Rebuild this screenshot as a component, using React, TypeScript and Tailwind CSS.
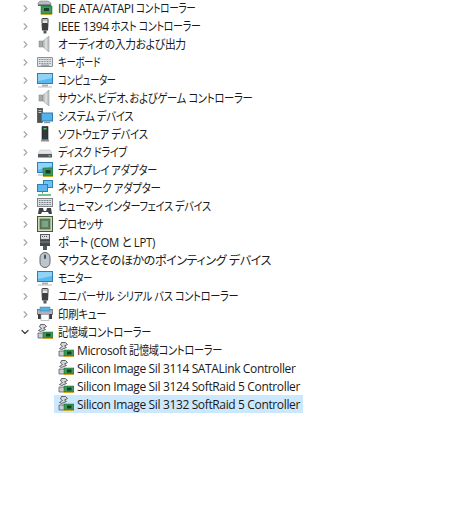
import { ChevronDown, ChevronRight } from "lucide-react"
import type { ReactNode } from "react"

const IdeIcon = () => (
    <svg width="16" height="16" viewBox="0 0 16 16">
        <path d="M1 3l2-2h8l3 2v2H1z" fill="#b8bcbf" stroke="#70767b" strokeWidth="0.5" />
        <rect x="1" y="4.5" width="13" height="1.5" fill="#5c6266" />
        <rect x="4" y="6" width="11" height="8" fill="#3b9a58" stroke="#116331" strokeWidth="0.5" />
        <rect x="7" y="8" width="5" height="3" fill="#17402a" />
        <path d="M4 14.5h11" stroke="#d0a92c" strokeWidth="1" />
    </svg>
)

const UsbIcon = () => (
    <svg width="16" height="16" viewBox="0 0 16 16">
        <rect x="5" y="0.5" width="6" height="5" rx="0.5" fill="#e6e6e6" stroke="#3c3c3c" />
        <path d="M6.5 2h1M8.5 2h1" stroke="#3c3c3c" />
        <path d="M4.5 5.5h7l-.5 7h-6z" fill="#3d3f42" />
        <rect x="6.5" y="12.5" width="3" height="3" fill="#55585c" />
    </svg>
)

const SpeakerIcon = () => (
    <svg width="16" height="16" viewBox="0 0 16 16">
        <rect x="2" y="5" width="4" height="6" fill="#a5aaa9" stroke="#7d8382" strokeWidth="0.5" />
        <path d="M6 5l6-5v16l-6-5z" fill="#c4c8c7" stroke="#838988" strokeWidth="0.5" />
        <path d="M9 2.5v11" stroke="#eceeed" />
    </svg>
)

const KeyboardIcon = () => (
    <svg width="16" height="16" viewBox="0 0 16 16">
        <rect x="0.5" y="3.5" width="15" height="9" rx="0.5" fill="#dfe2e5" stroke="#8b9196" />
        <path d="M2 5.5h12M2 7.5h12M2 9.5h12" stroke="#858c93" strokeDasharray="1 0.6" />
        <path d="M4 11.2h8" stroke="#858c93" />
    </svg>
)

const MonitorIcon = () => (
    <svg width="16" height="16" viewBox="0 0 16 16">
        <rect x="0.5" y="1.5" width="15" height="10" fill="#5bb8ef" stroke="#2d7fb8" />
        <path d="M1 2h14v4L1 9z" fill="#8fd3f7" />
        <path d="M5 13.5h6" stroke="#a9adb1" strokeWidth="2" />
        <path d="M1 15h14" stroke="#b7bbbf" />
    </svg>
)

const SystemIcon = () => (
    <svg width="16" height="16" viewBox="0 0 16 16">
        <rect x="0.5" y="0.5" width="5" height="14" fill="#4e5358" stroke="#30343a" strokeWidth="0.6" />
        <path d="M1.5 2.5h3M1.5 4.5h3" stroke="#c8ccd0" />
        <rect x="4.5" y="5" width="11" height="8" fill="#54b2e8" stroke="#2b7db4" />
        <path d="M7 14.5h6" stroke="#8f9498" strokeWidth="1.4" />
    </svg>
)

const TowerIcon = () => (
    <svg width="16" height="16" viewBox="0 0 16 16">
        <path d="M5 0.5h6v13H5z" fill="#33373b" stroke="#1f2225" strokeWidth="0.6" />
        <rect x="6.5" y="2" width="3" height="1.5" fill="#51c76e" />
        <rect x="4" y="13.5" width="8" height="2" fill="#8d9195" />
    </svg>
)

const DiskIcon = () => (
    <svg width="16" height="16" viewBox="0 0 16 16">
        <path d="M3 6h10l2 4H1z" fill="#e4e5e6" stroke="#b8babc" strokeWidth="0.5" />
        <rect x="1" y="10" width="14" height="3.5" rx="0.5" fill="#53575b" />
        <rect x="11.5" y="11" width="2" height="1.4" fill="#5ed16f" />
    </svg>
)

const DisplayAdapterIcon = () => (
    <svg width="16" height="16" viewBox="0 0 16 16">
        <rect x="0.5" y="0.5" width="15" height="10" fill="#5bb8ef" stroke="#2d7fb8" />
        <path d="M1 1h14v3L1 8z" fill="#8fd3f7" />
        <rect x="6" y="6" width="10" height="8" fill="#3b9a58" stroke="#116331" strokeWidth="0.5" />
        <rect x="8.5" y="8" width="5" height="3.5" fill="#17402a" />
        <path d="M6 14.5h10" stroke="#d0a92c" />
        <path d="M1 13h4" stroke="#a9adb1" />
    </svg>
)

const NetworkIcon = () => (
    <svg width="16" height="16" viewBox="0 0 16 16">
        <rect x="6.5" y="0.5" width="9" height="7" fill="#6fc2f2" stroke="#2d7fb8" />
        <rect x="0.5" y="4.5" width="10" height="7" fill="#5bb8ef" stroke="#2d7fb8" />
        <path d="M5.5 11.5v2" stroke="#7f8488" />
        <path d="M1 15h13" stroke="#4fbb62" strokeWidth="1.6" />
    </svg>
)

const HumanIcon = () => (
    <svg width="16" height="16" viewBox="0 0 16 16">
        <rect x="0.5" y="0.5" width="15" height="8" fill="#dfe2e5" stroke="#7f858a" />
        <path d="M2 2.5h12M2 4.5h12M2 6.5h12" stroke="#6e757b" strokeDasharray="1 0.6" />
        <path d="M1 16l1-6h4l.8 3h2.4l.8-3h4l1 6h-3l-1-2H5l-1 2z" fill="#3d4145" />
    </svg>
)

const CpuIcon = () => (
    <svg width="16" height="16" viewBox="0 0 16 16">
        <rect x="0.5" y="0.5" width="15" height="15" fill="#d3d6b9" stroke="#3e5c38" />
        <rect x="3" y="3" width="10" height="10" fill="#5b8465" stroke="#365540" strokeWidth="0.6" />
        <rect x="5" y="5" width="6" height="6" fill="#7ea386" />
    </svg>
)

const PortIcon = () => (
    <svg width="16" height="16" viewBox="0 0 16 16">
        <rect x="3.5" y="0.5" width="9" height="5" fill="#d9dbdd" stroke="#55585c" />
        <path d="M5 2.5h6" stroke="#55585c" strokeDasharray="1 1" />
        <path d="M3 6h10v6H3z" fill="#45484c" />
        <path d="M3 8h10" stroke="#85898d" />
        <rect x="6" y="12" width="4" height="4" fill="#55585c" />
    </svg>
)

const MouseIcon = () => (
    <svg width="16" height="16" viewBox="0 0 16 16">
        <rect x="3" y="0.5" width="10" height="15" rx="5" fill="#bcc4cc" stroke="#5f676f" />
        <rect x="7" y="2.5" width="2" height="4.5" rx="1" fill="#4a5158" />
    </svg>
)

const PrinterIcon = () => (
    <svg width="16" height="16" viewBox="0 0 16 16">
        <rect x="0.5" y="3.5" width="15" height="5" fill="#aeb3b7" stroke="#55595d" strokeWidth="0.7" />
        <rect x="3" y="1" width="10" height="4" fill="#58b0e3" stroke="#3a80ad" strokeWidth="0.5" />
        <rect x="1" y="8" width="3" height="5" fill="#3a3e42" />
        <rect x="12" y="8" width="3" height="5" fill="#3a3e42" />
        <rect x="4" y="8.5" width="8" height="6" fill="#ffffff" stroke="#9a9ea2" strokeWidth="0.6" />
    </svg>
)

const StorageIcon = () => (
    <svg width="16" height="16" viewBox="0 0 16 16">
        <path d="M3.5 0.5h4l2 2-3 1.5 2 1.5-5 2-2-1 3-2-2-1.5z" fill="#d4d7da" stroke="#3f4347" strokeWidth="0.8" />
        <path d="M1 9h6v5H1z" fill="#c9ccce" stroke="#4a4e52" strokeWidth="0.7" />
        <rect x="6" y="8" width="10" height="6" fill="#3b9a58" stroke="#116331" strokeWidth="0.5" />
        <rect x="9" y="9.5" width="4.5" height="3" fill="#17402a" />
        <path d="M6 14.5h10" stroke="#d0a92c" />
    </svg>
)

// Yu Gothic's kana run narrower than Noto's, so each run gets squeezed to the width in the shot
const Squeezed = ({ scale, children }: { scale: string; children: ReactNode }) => (
    <span className={`inline-block origin-left ${scale}`}>{children}</span>
)

const categories: Array<{ key: string; label: ReactNode; icon: ReactNode }> = [
    { key: "ide", label: <>IDE ATA/ATAPI <Squeezed scale="scale-x-[0.8]">コントローラー</Squeezed></>, icon: <IdeIcon /> },
    { key: "1394", label: <>IEEE 1394 <Squeezed scale="scale-x-[0.83]">ホスト コントローラー</Squeezed></>, icon: <UsbIcon /> },
    { key: "audio", label: <Squeezed scale="scale-x-[0.9]">オーディオの入力および出力</Squeezed>, icon: <SpeakerIcon /> },
    { key: "keyboard", label: <Squeezed scale="scale-x-[0.78]">キーボード</Squeezed>, icon: <KeyboardIcon /> },
    { key: "computer", label: <Squeezed scale="scale-x-[0.77]">コンピューター</Squeezed>, icon: <MonitorIcon /> },
    { key: "sound", label: <Squeezed scale="scale-x-[0.86]">サウンド、ビデオ、およびゲーム コントローラー</Squeezed>, icon: <SpeakerIcon /> },
    { key: "system", label: <Squeezed scale="scale-x-[0.865]">システム デバイス</Squeezed>, icon: <SystemIcon /> },
    { key: "software", label: <Squeezed scale="scale-x-[0.865]">ソフトウェア デバイス</Squeezed>, icon: <TowerIcon /> },
    { key: "disk", label: <Squeezed scale="scale-x-[0.84]">ディスク ドライブ</Squeezed>, icon: <DiskIcon /> },
    { key: "display", label: <Squeezed scale="scale-x-[0.846]">ディスプレイ アダプター</Squeezed>, icon: <DisplayAdapterIcon /> },
    { key: "network", label: <Squeezed scale="scale-x-[0.87]">ネットワーク アダプター</Squeezed>, icon: <NetworkIcon /> },
    { key: "human", label: <Squeezed scale="scale-x-[0.845]">ヒューマン インターフェイス デバイス</Squeezed>, icon: <HumanIcon /> },
    { key: "cpu", label: <Squeezed scale="scale-x-[0.85]">プロセッサ</Squeezed>, icon: <CpuIcon /> },
    { key: "port", label: <Squeezed scale="scale-x-[0.95]">ポート (COM と LPT)</Squeezed>, icon: <PortIcon /> },
    { key: "mouse", label: "マウスとそのほかのポインティング デバイス", icon: <MouseIcon /> },
    { key: "monitor", label: <Squeezed scale="scale-x-[0.79]">モニター</Squeezed>, icon: <MonitorIcon /> },
    { key: "usb", label: <Squeezed scale="scale-x-[0.85]">ユニバーサル シリアル バス コントローラー</Squeezed>, icon: <UsbIcon /> },
    { key: "print", label: <Squeezed scale="scale-x-[0.87]">印刷キュー</Squeezed>, icon: <PrinterIcon /> },
]

const controllers: Array<{ key: string; label: ReactNode }> = [
    { key: "ms", label: <>Microsoft <Squeezed scale="scale-x-[0.85]">記憶域コントローラー</Squeezed></> },
    { key: "3114", label: "Silicon Image Sil 3114 SATALink Controller" },
    { key: "3124", label: "Silicon Image Sil 3124 SoftRaid 5 Controller" },
    { key: "3132", label: "Silicon Image Sil 3132 SoftRaid 5 Controller" },
]

export default function App() {
    return (
        <div className="h-[519px] w-[472px] overflow-hidden bg-white text-[12px] leading-[18px] text-[#1a1a1a] [font-feature-settings:'palt'] font-['Open_Sans','Noto_Sans_CJK_JP',sans-serif]">
            <div className="-mt-px flex flex-col">
                {categories.map((item) => (
                    <div key={item.key} className="flex h-[18px] items-center whitespace-nowrap">
                        <ChevronRight className="ml-[20px] mr-[6px] h-[11px] w-[11px] shrink-0 text-[#a6a6a6]" strokeWidth={2.5} />
                        <span className="mr-[5px] shrink-0">{item.icon}</span>
                        <span className="pt-px tracking-[-0.36px]">{item.label}</span>
                    </div>
                ))}
                <div className="flex h-[18px] items-center whitespace-nowrap">
                    <ChevronDown className="ml-[19px] mr-[6px] h-[12px] w-[12px] shrink-0 text-[#444444]" strokeWidth={2.5} />
                    <span className="mr-[5px] shrink-0"><StorageIcon /></span>
                    <span className="pt-px tracking-[-0.36px]"><Squeezed scale="scale-x-[0.85]">記憶域コントローラー</Squeezed></span>
                </div>
                {controllers.map((item) => (
                    <div
                        key={item.key}
                        className={
                            item.key === "3132"
                                ? "ml-[54px] flex h-[18px] w-[249px] items-center whitespace-nowrap bg-[#cce8ff]"
                                : "ml-[54px] flex h-[18px] w-[249px] items-center whitespace-nowrap"
                        }
                    >
                        <span className="ml-[4px] mr-[3px] shrink-0"><StorageIcon /></span>
                        <span className="pt-px tracking-[-0.36px]">{item.label}</span>
                    </div>
                ))}
            </div>
        </div>
    )
}
